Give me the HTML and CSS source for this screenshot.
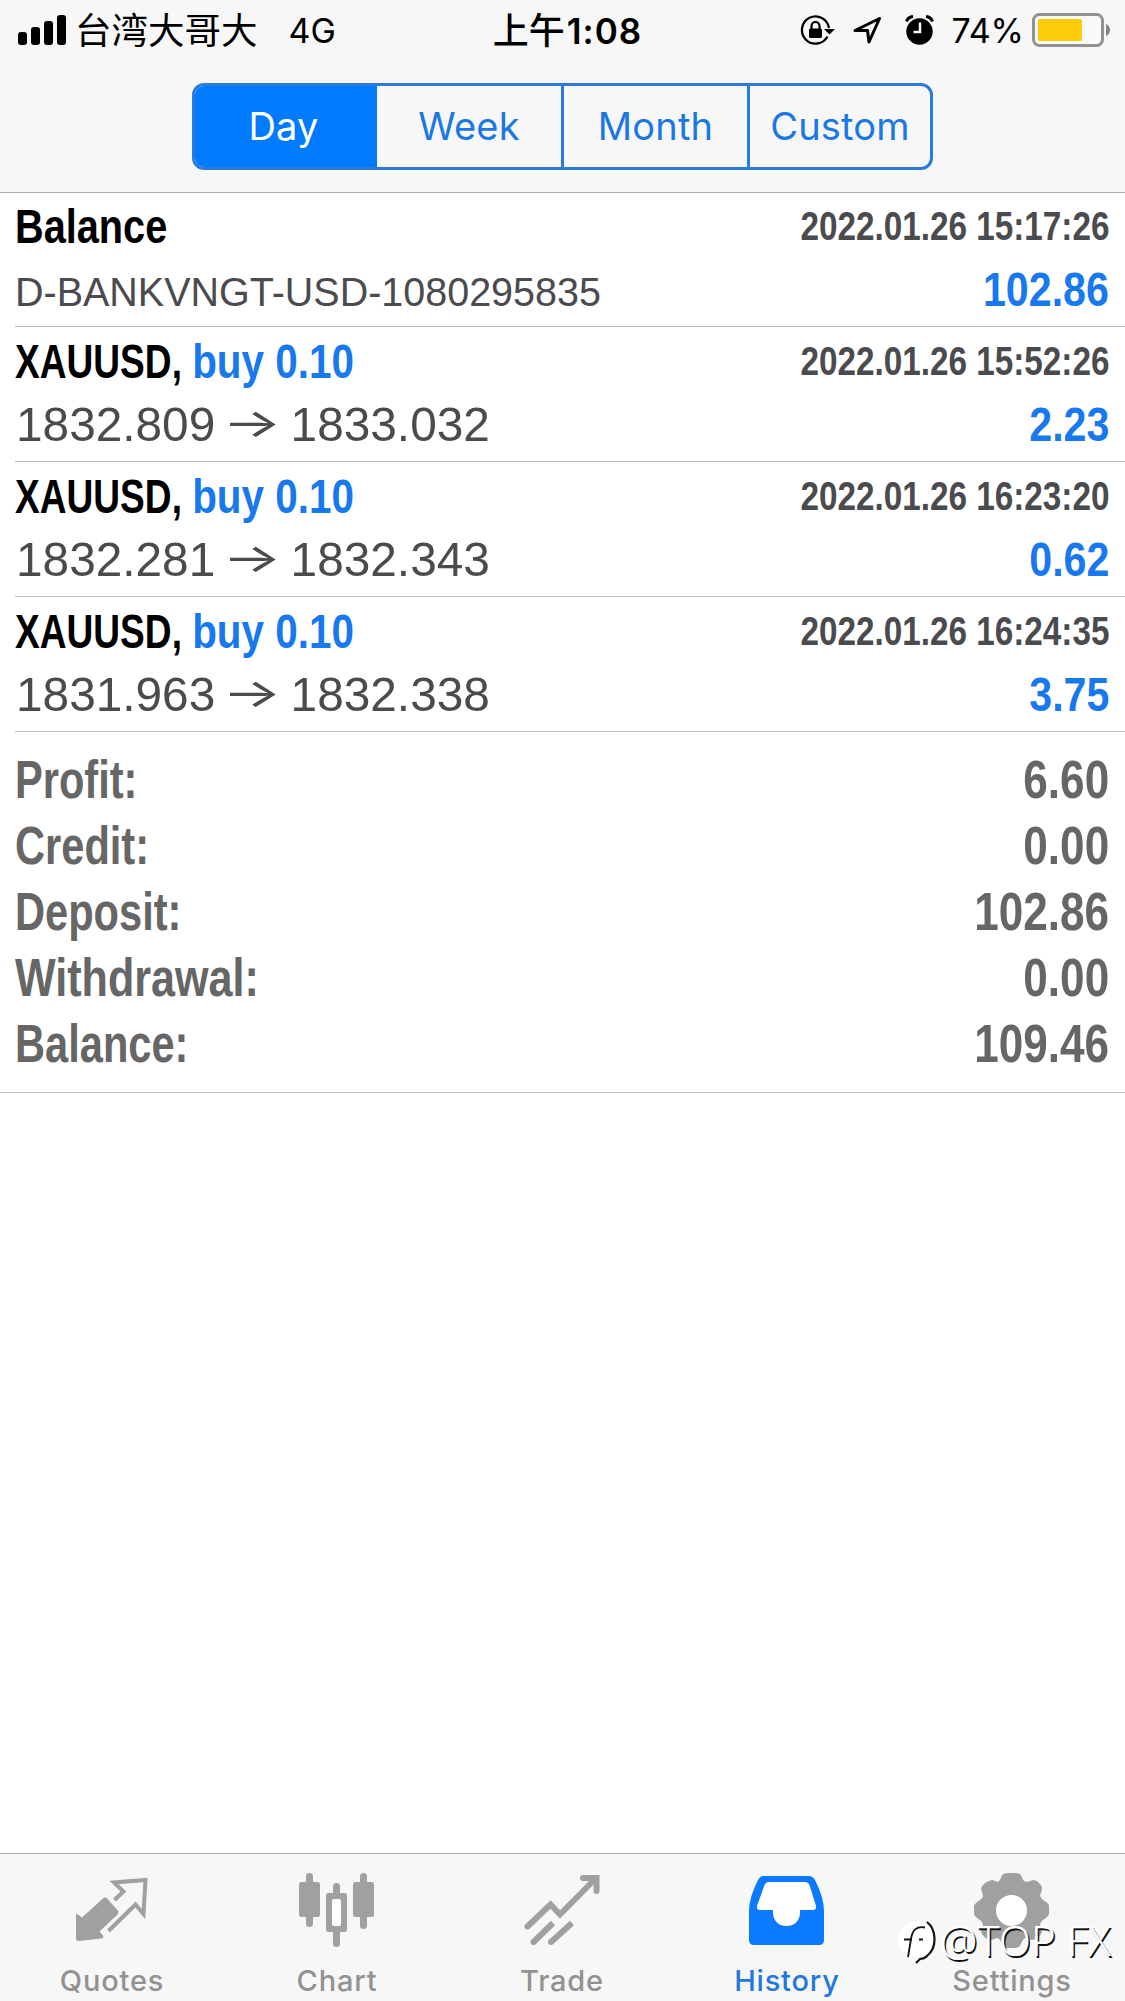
FILE: index.html
```html
<!DOCTYPE html>
<html lang="en">
<head>
<meta charset="utf-8">
<title>History</title>
<link rel="stylesheet" href="styles.css">
</head>
<body>
<div class="app">
  <header class="top">
    <div class="status">
      <div class="status-left">
        <svg class="signal" width="49" height="32" viewBox="0 0 49 32"><rect x="0" y="18" width="9" height="13" rx="3"/><rect x="13" y="13" width="9" height="18" rx="3"/><rect x="26" y="7" width="9" height="24" rx="3"/><rect x="39" y="1" width="9" height="30" rx="3"/></svg>
        <span class="carrier">台湾大哥大</span>
        <span class="network">4G</span>
      </div>
      <div class="clock">上午<span class="digits">1:08</span></div>
      <div class="status-right">
        <svg class="lock" width="36" height="32" viewBox="0 0 36 32"><path d="M27.500 22.500A13.600 13.600 0 1 1 29 14" fill="none" stroke="#000" stroke-width="2.300"/><path d="M24 15H35L29.500 20.500Z"/><rect x="9" y="14.500" width="13" height="9.500" rx="1.500"/><path d="M11.500 15V12a4 4 0 0 1 8 0v3" fill="none" stroke="#000" stroke-width="2.200"/></svg>
        <svg class="location" width="29" height="29" viewBox="0 0 29 29"><path d="M2 14.500L26.500 2.500L16 26L14.500 14.500Z" fill="none" stroke="#000" stroke-width="3" stroke-linejoin="round"/></svg>
        <svg class="alarm" width="29" height="30" viewBox="0 0 29 30"><circle cx="14.500" cy="16.500" r="13.200"/><path d="M1.500 6.500Q3 2 8 1.500M27.500 6.500Q26 2 21 1.500" fill="none" stroke="#000" stroke-width="3"/><path d="M15 7.500V17H8.500" fill="none" stroke="#f7f7f7" stroke-width="2.500"/></svg>
        <span class="percent">74%</span>
        <svg class="battery" width="79" height="35" viewBox="0 0 79 35"><rect x="1.500" y="1.500" width="69" height="31" rx="6" fill="#fafafa" stroke="#929292" stroke-width="3"/><rect x="6" y="6" width="44" height="22" rx="1.500" fill="#ffcc0c"/><path d="M74 11Q78 12.500 78 17T74 23Z" fill="#858585"/></svg>
      </div>
    </div>
    <nav class="segments">
      <a class="segment selected">Day</a>
      <a class="segment week">Week</a>
      <a class="segment month">Month</a>
      <a class="segment">Custom</a>
    </nav>
  </header>

  <main class="content">
    <section class="deal">
      <div class="line"><b class="title t-balance">Balance</b><time class="date">2022.01.26 15:17:26</time></div>
      <div class="line second"><span class="comment">D-BANKVNGT-USD-1080295835</span><b class="amount">102.86</b></div>
    </section>
    <section class="deal">
      <div class="line"><b class="title">XAUUSD, <span class="side">buy 0.10</span></b><time class="date">2022.01.26 15:52:26</time></div>
      <div class="line second"><span class="prices">1832.809 <i class="arrow">→</i> 1833.032</span><b class="amount">2.23</b></div>
    </section>
    <section class="deal">
      <div class="line"><b class="title">XAUUSD, <span class="side">buy 0.10</span></b><time class="date">2022.01.26 16:23:20</time></div>
      <div class="line second"><span class="prices">1832.281 <i class="arrow">→</i> 1832.343</span><b class="amount">0.62</b></div>
    </section>
    <section class="deal">
      <div class="line"><b class="title">XAUUSD, <span class="side">buy 0.10</span></b><time class="date">2022.01.26 16:24:35</time></div>
      <div class="line second"><span class="prices">1831.963 <i class="arrow">→</i> 1832.338</span><b class="amount">3.75</b></div>
    </section>
    <section class="summary">
      <div class="total"><span class="label">Profit:</span><span class="value">6.60</span></div>
      <div class="total"><span class="label">Credit:</span><span class="value">0.00</span></div>
      <div class="total"><span class="label">Deposit:</span><span class="value">102.86</span></div>
      <div class="total"><span class="label wide">Withdrawal:</span><span class="value">0.00</span></div>
      <div class="total"><span class="label">Balance:</span><span class="value">109.46</span></div>
    </section>
  </main>

  <nav class="tabs">
    <a class="tab">
      <svg width="80" height="80" viewBox="0 0 80 80"><path d="M4 44.500Q4 42 6 43.500L10 46.500L31 27.500Q33.500 25.500 35.500 28L45.500 39Q47.500 41.500 45 44L27.500 60.500L31 64.500Q32 67 29.500 67.500L7 70Q4 70 4 67.500Z"/><path d="M42.500 29L51.500 20.500L42 11.500L73.500 9L71.500 43L63.500 33.500L36.500 60" fill="none" stroke="#a0a0a0" stroke-width="4"/></svg>
      <span>Quotes</span>
    </a>
    <a class="tab">
      <svg width="80" height="80" viewBox="0 0 80 80"><rect x="2" y="11" width="21" height="35" rx="2.500"/><rect x="9" y="2" width="7" height="54" rx="3.500"/><rect x="56" y="11" width="21" height="35" rx="2.500"/><rect x="63" y="2" width="7" height="56" rx="3.500"/><rect x="36" y="12" width="7" height="64" rx="3.500"/><rect x="29" y="22" width="21" height="39" rx="2.500"/><rect x="35" y="28" width="9" height="27" rx="2" fill="#fff"/></svg>
      <span>Chart</span>
    </a>
    <a class="tab">
      <svg width="80" height="80" viewBox="0 0 80 80"><g fill="none" stroke="#a0a0a0" stroke-width="6" stroke-linecap="round"><path d="M5.500 55.500L28.500 33.500L38 43.500L73 8"/><path d="M61 7H74.500V20" stroke-linejoin="miter"/></g><path d="M11.500 71L31 52M29 71L50 52" fill="none" stroke="#a0a0a0" stroke-width="6"/><circle cx="11.500" cy="71" r="3"/><circle cx="29" cy="71" r="3"/></svg>
      <span>Trade</span>
    </a>
    <a class="tab active">
      <svg width="80" height="80" viewBox="0 0 80 80"><path d="M16 5H62Q66 5 68.500 10Q77 27 77 40V69Q77 74 72 74H7Q2 74 2 69V40Q2 27 10.500 10Q13 5 16 5Z"/><path d="M22 11H58Q61 11 62.500 14L69 35Q69.500 39 66 39H53V43Q51 55 39.500 55T26 43V39H13Q9.500 39 10 35L17.500 14Q19 11 22 11Z" fill="#fff"/></svg>
      <span>History</span>
    </a>
    <a class="tab">
      <svg width="80" height="80" viewBox="0 0 80 80"><path d="M30 4Q32 2 36 2H43Q47 2 49 4L51 9Q53 11 55 11L61 9Q66 9 70 16Q70 19 68 25Q69 27 71 29Q77 32 77 35V43Q76 46 71 49Q68 51 68 54L70 61Q67 68 60 69L54 67Q51 67 49 73Q47 77 43 77H36Q32 77 30 73Q28 67 25 67L19 69Q12 68 9 61L11 54Q11 51 8 49Q3 46 2 43V35Q3 32 8 29Q11 27 11 25L9 17Q13 10 20 9L26 11Q28 10 30 4Z"/><circle cx="39.500" cy="39.500" r="15.500" fill="#fff"/></svg>
      <span>Settings</span>
    </a>
    <div class="watermark">
      <svg width="42" height="46" viewBox="0 0 42 46"><circle cx="20" cy="21" r="18" fill="#fff"/><path d="M31 4C40 11 42 29 31 38Q28 41 24 41L20 45" fill="none" stroke="#111" stroke-width="2.200"/><path d="M29 9.500Q17 7 15 21L12 39M8 21.500H16M23 21.500H27" fill="none" stroke="#111" stroke-width="1.800"/></svg>
      <span>@TOP FX</span>
    </div>
  </nav>
</div>
</body>
</html>
```
FILE: styles.css
```css
* { box-sizing: border-box; }
body { margin: 0; background: #fff; font-family: "Liberation Sans", sans-serif; }
.app { width: 1125px; height: 2001px; display: flex; flex-direction: column; overflow: hidden; }
.top { height: 193px; flex: none; background: #f7f7f7; border-bottom: 1px solid #adadad; }
.status { height: 60px; margin-bottom: 23px; padding: 0 14px 0 18px; display: grid; grid-template: 60px / 1fr auto 1fr; align-items: center; font: 34px/56px Inter, "Noto Sans CJK SC", sans-serif; color: #000; }
.status-left, .status-right { display: flex; align-items: center; }
.status-right { justify-content: flex-end; }
.carrier { margin-left: 8px; font: 36.5px/56px "Noto Sans CJK SC", sans-serif; padding-bottom: 2px; }
.network { margin-left: 31px; padding-top: 1px; }
.clock { font: 500 36px/56px "Noto Sans CJK SC", sans-serif; padding: 0 0 2px 6px; }
.digits { margin-left: 2px; font: 600 35px/56px Inter, sans-serif; letter-spacing: 1px; }
.location { margin-left: 17px; }
.alarm { margin-left: 23px; }
.percent { margin-left: 17px; padding-top: 1px; }
.battery { margin-left: 8px; }
.segments { width: 741px; height: 87px; margin-left: 192px; display: flex; border: 3px solid #2b7bdc; border-radius: 12px; overflow: hidden; }
.segment { flex: 1; padding-bottom: 2px; display: flex; align-items: center; justify-content: center; border-left: 3px solid #2b7bdc; color: #1a78e6; font: 38px/1 Inter, sans-serif; letter-spacing: 0.2px; }
.segment.selected { flex: 0 0 182px; margin-left: -1px; padding-right: 3px; background: #007aff; color: #fff; border: 0; }
.segment.week { flex: 0 0 185px; border-left: 1px solid #007aff; }
.segment.month { flex: 0 0 186px; }

.deal { height: 135px; margin-left: 15px; padding: 1px 16px 0 0; border-bottom: 1px solid #bdbdc0; }
.deal:first-child { height: 134px; padding-top: 0; }
.line { display: flex; justify-content: space-between; align-items: flex-start; height: 64px; white-space: pre; }
.title, .comment, .prices, .label, .side { transform-origin: 0 50%; }
.date, .amount, .value { transform-origin: 100% 50%; }
.title { font-size: 49px; line-height: 66px; color: #000; transform: scaleX(.757); }
.t-balance { transform: scaleX(.81); }
.side { display: inline-block; color: #1878ee; transform: scaleX(1.09); }
.date { font-size: 40px; line-height: 66px; font-weight: 700; color: #4b4b4f; transform: scaleX(.832); }
.comment { font-size: 40px; line-height: 70px; color: #4b4b4f; transform: scaleX(.987); }
.prices { margin-left: 1px; font-size: 49px; line-height: 64px; color: #4b4b4f; transform: scaleX(.975); }
.arrow { display: inline-block; width: 50px; text-align: center; font: 400 40px/40px Inter, sans-serif; transform: translate(-1px, -4px) scaleX(1.6); }
.amount { font-size: 49px; line-height: 64px; color: #1878ee; transform: scaleX(.84); }
.summary { padding: 15px 16px 15px 15px; height: 361px; border-bottom: 1px solid #bdbdbd; }
.total { height: 66px; display: flex; justify-content: space-between; font: 700 53px/66px "Liberation Sans", sans-serif; color: #666; }
.label { transform: scaleX(.785); }
.label.wide { transform: scaleX(.813); }
.value { transform: scaleX(.832); }

.tabs { position: relative; margin-top: auto; height: 148px; flex: none; display: flex; background: #f7f7f7; border-top: 1px solid #adadad; }
.tab { flex: 1; padding: 17px 1px 0 0; display: flex; flex-direction: column; align-items: center; fill: #a0a0a0; color: #929292; font: 500 29px/40px Inter, sans-serif; letter-spacing: 0.8px; }
.tab span { margin-top: 10px; }
.tab.active { fill: #0a7aff; color: #2378df; }
.watermark { position: absolute; left: 896px; top: 64px; display: flex; font: 300 42px/44px "Noto Sans", sans-serif; color: #fff; text-shadow: 1.5px 1.5px 0 #111; white-space: pre; }
.watermark span { margin-left: 2px; }
```
